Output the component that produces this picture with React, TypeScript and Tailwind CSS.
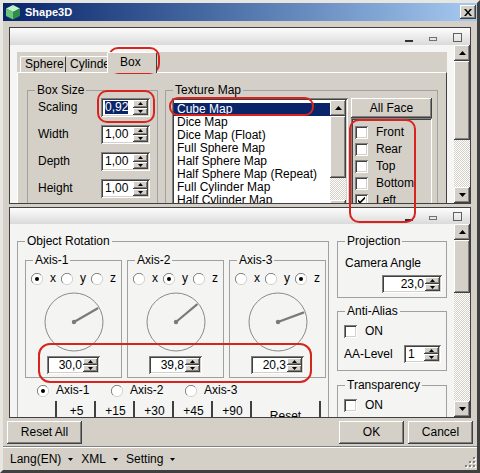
import React from "react";

const raised =
  "bg-[#d4d0c8] shadow-[inset_-1px_-1px_#404040,inset_1px_1px_#ffffff,inset_-2px_-2px_#808080]";
const sunken =
  "shadow-[inset_1px_1px_#808080,inset_-1px_-1px_#ffffff,inset_2px_2px_#404040,inset_-2px_-2px_#d4d0c8]";

function Tri({ up, w = 7 }: { up?: boolean; w?: number }) {
  const h = Math.ceil(w / 2);
  return (
    <svg width={w} height={h} viewBox={`0 0 ${w} ${h}`}>
      <polygon
        points={up ? `0,${h} ${w},${h} ${w / 2},0` : `0,0 ${w},0 ${w / 2},${h}`}
        fill="#000"
      />
    </svg>
  );
}

function VScroll({ thumb }: { thumb: string }) {
  return (
    <div className="w-[16px] shrink-0 flex flex-col bg-[repeating-conic-gradient(#d4d0c8_0%_25%,#ffffff_0%_50%)] bg-size-[2px_2px]">
      <div className={`h-[16px] flex items-center justify-center ${raised}`}>
        <Tri up />
      </div>
      <div className={`${thumb} ${raised}`} />
      <div className="flex-1" />
      <div className={`h-[16px] flex items-center justify-center ${raised}`}>
        <Tri />
      </div>
    </div>
  );
}

function Spin({
  value,
  className,
  right,
  selected,
}: {
  value: string;
  className: string;
  right?: boolean;
  selected?: boolean;
}) {
  return (
    <div className={`flex bg-white p-[2px] ${sunken} ${className}`}>
      <div className={`flex-1 flex items-center ${right ? "justify-end pr-[1px]" : "pl-[2px]"}`}>
        <span className={selected ? "bg-[#0a246a] text-white" : ""}>{value}</span>
      </div>
      <div className="w-[15px] flex flex-col">
        <div className={`flex-1 flex items-center justify-center ${raised}`}>
          <Tri up w={5} />
        </div>
        <div className={`flex-1 flex items-center justify-center ${raised}`}>
          <Tri w={5} />
        </div>
      </div>
    </div>
  );
}

function Check({ checked }: { checked?: boolean }) {
  return (
    <div className={`w-[13px] h-[13px] shrink-0 bg-white ${sunken} flex items-center justify-center`}>
      {checked && (
        <svg width="7" height="7" viewBox="0 0 7 7">
          <path d="M0 2.5 L2 4.5 L7 -0.5 L7 1.8 L2 6.8 L0 4.8 Z" fill="#000" />
        </svg>
      )}
    </div>
  );
}

function Radio({ on }: { on?: boolean }) {
  return (
    <svg width="12" height="12" viewBox="0 0 12 12" className="shrink-0">
      <circle cx="6" cy="6" r="5.5" fill="#fff" />
      <path d="M10 2 A5.5 5.5 0 0 0 2 10" fill="none" stroke="#808080" />
      <path d="M2 10 A5.5 5.5 0 0 0 10 2" fill="none" stroke="#d4d0c8" />
      {on && <circle cx="6" cy="6" r="2" fill="#000" />}
    </svg>
  );
}

function Dial({ deg }: { deg: number }) {
  const a = (deg * Math.PI) / 180;
  const x = 30 + 27 * Math.cos(a);
  const y = 30 - 27 * Math.sin(a);
  return (
    <svg width="60" height="60" viewBox="0 0 60 60">
      <circle cx="30" cy="30" r="29" fill="none" stroke="#8a8a8a" />
      <line x1="30" y1="30" x2={x} y2={y} stroke="#7a7a7a" strokeWidth="2.2" strokeLinecap="round" />
      <circle cx="30" cy="30" r="2.2" fill="#7a7a7a" />
    </svg>
  );
}

function Group({
  title,
  className,
  children,
}: {
  title: string;
  className: string;
  children: React.ReactNode;
}) {
  return (
    <fieldset className={`border border-[#a0a0a0] shrink-0 ${className}`}>
      <legend className="ml-[7px] px-[2px] leading-[13px]">{title}</legend>
      {children}
    </fieldset>
  );
}

function PanelHeader({ tall }: { tall?: boolean }) {
  return (
    <div
      className={`${tall ? "h-[17px] pb-[3px]" : "h-[16px] pb-[3px]"} shrink-0 bg-linear-to-b from-[#fdfdfd] to-[#dadada] flex items-end justify-end pr-[8px] gap-[16px]`}
    >
      <div className="w-[8px] h-[2px] bg-[#303030]" />
      <div className="w-[8px] h-[4px] border border-[#707070] mb-[1px]" />
      <div className="w-[9px] h-[9px] border border-[#606060]" />
    </div>
  );
}

function Oval({ className }: { className: string }) {
  return <div className={`absolute border-2 border-[#d8231f] pointer-events-none ${className}`} />;
}

const textures = [
  "Cube Map",
  "Dice Map",
  "Dice Map (Float)",
  "Full Sphere Map",
  "Half Sphere Map",
  "Half Sphere Map (Repeat)",
  "Full Cylinder Map",
  "Half Cylinder Map",
  "Full Box Map",
];

const axes = [
  { name: "Axis-1", sel: 0, value: "30,0", deg: 30 },
  { name: "Axis-2", sel: 1, value: "39,8", deg: 39.8 },
  { name: "Axis-3", sel: 2, value: "20,3", deg: 20.3 },
];

export default function App() {
  return (
    <div className="relative w-[480px] h-[473px] overflow-hidden bg-[#d4d0c8] border-[3px] border-t-[#e8e6e0] border-l-[#e8e6e0] border-r-[#404040] border-b-[#404040] flex flex-col font-['Liberation_Sans',Arial,sans-serif] text-[12px] leading-[13px] text-black">
      {/* title bar */}
      <div className="h-[18px] shrink-0 flex items-center bg-linear-to-r from-[#0a246a] to-[#a6caf0] pl-[2px] pr-[1px]">
        <svg width="16" height="16" viewBox="0 0 16 16">
          <polygon points="8,1 15,4.5 8,8 1,4.5" fill="#bff2c6" />
          <polygon points="1,4.5 8,8 8,15.5 1,12" fill="#6cc47a" />
          <polygon points="15,4.5 8,8 8,15.5 15,12" fill="#2f8c4a" />
        </svg>
        <span className="ml-[4px] text-white font-bold text-[11px]">Shape3D</span>
        <div className={`ml-auto w-[16px] h-[14px] flex items-center justify-center ${raised}`}>
          <svg width="8" height="7" viewBox="0 0 8 7">
            <path d="M0 0h2l2 2.4L6 0h2L5 3.5 8 7H6L4 4.6 2 7H0l3-3.5z" fill="#000" />
          </svg>
        </div>
      </div>

      <div className="flex-1 flex flex-col px-[4px] pt-[6px]">
        {/* top panel */}
        <div className="mx-[2px] h-[177px] shrink-0 border border-[#404040] flex flex-col overflow-hidden">
          <PanelHeader tall />
          <div className="flex flex-1 min-h-0">
            <div className="flex-1 bg-[#f5f5f4] pl-[7px] pt-[7px] overflow-hidden">
              <div className="w-[430px] h-[200px] bg-[#d4d0c8] flex flex-col">
                <div className="h-[20px] shrink-0 flex items-end pl-[3px]">
                  <div className="h-[16px] w-[46px] pl-[4px] flex items-center whitespace-nowrap border-t border-l border-white border-r border-r-[#404040] rounded-t-[2px]">
                    Sphere
                  </div>
                  <div className="h-[16px] w-[43px] pl-[4px] flex items-center whitespace-nowrap border-t border-white rounded-t-[2px]">
                    Cylinder
                  </div>
                  <div className="relative z-10 -ml-[2px] -mb-[1px] h-[21px] w-[50px] pl-[12px] pt-[3px] bg-[#d4d0c8] border-t border-l border-white border-r border-r-[#404040] rounded-t-[2px]">
                    Box
                  </div>
                </div>
                <div className="flex-1 border-t border-l border-white border-r border-r-[#404040] flex pl-[9px] pt-[11px] gap-[7px]">
                  <Group title="Box Size" className="w-[131px] h-[140px]">
                    <div className="mt-[1px] pl-[10px] flex flex-col gap-[8px]">
                      {[
                        ["Scaling", "0,92"],
                        ["Width", "1,00"],
                        ["Depth", "1,00"],
                        ["Height", "1,00"],
                      ].map(([l, v], i) => (
                        <div key={l} className="flex items-center h-[19px]">
                          <span className="w-[63px]">{l}</span>
                          <Spin value={v} className="w-[49px] h-[19px]" selected={i === 0} />
                        </div>
                      ))}
                    </div>
                  </Group>
                  <Group title="Texture Map" className="w-[273px] h-[140px]">
                    <div className="mt-[1px] flex pl-[6px] gap-[3px]">
                      <div className={`w-[176px] h-[120px] bg-white p-[2px] flex ${sunken}`}>
                        <div className="flex-1 pt-[3px] overflow-hidden">
                          {textures.map((t, i) => (
                            <div
                              key={t}
                              className={`h-[13px] pl-[3px] whitespace-nowrap ${i === 0 ? "bg-[#0a246a] text-white" : ""}`}
                            >
                              {t}
                            </div>
                          ))}
                        </div>
                        <VScroll thumb="h-[62px]" />
                      </div>
                      <div className="w-[81px] flex flex-col">
                        <div className={`h-[20px] flex items-center justify-center ${raised}`}>All Face</div>
                        <div className={`h-[100px] p-[2px] pt-[8px] pl-[4px] flex flex-col gap-[4px] ${sunken}`}>
                          {["Front", "Rear", "Top", "Bottom", "Left"].map((f) => (
                            <div key={f} className="flex items-center h-[13px]">
                              <Check checked={f === "Left"} />
                              <span className="ml-[8px]">{f}</span>
                            </div>
                          ))}
                        </div>
                      </div>
                    </div>
                  </Group>
                </div>
              </div>
            </div>
            <VScroll thumb="h-[79px]" />
          </div>
        </div>

        {/* bottom panel */}
        <div className="mx-[2px] mt-[3px] h-[211px] shrink-0 border border-[#404040] flex flex-col overflow-hidden">
          <PanelHeader />
          <div className="flex flex-1 min-h-0">
            <div className="flex-1 bg-[#f4f4f3] flex pl-[7px] pt-[11px] gap-[8px] overflow-hidden">
              <Group title="Object Rotation" className="w-[312px] h-[200px]">
                <div className="flex gap-[5px] pl-[7px] mt-[6px]">
                  {axes.map((a) => (
                    <fieldset key={a.name} className="w-[95px] border border-[#a0a0a0]">
                      <legend className="ml-[7px] px-[2px] leading-[13px]">{a.name}</legend>
                      <div className="mt-[5px] flex pl-[5px]">
                        {["x", "y", "z"].map((c, i) => (
                          <div key={c} className="w-[30px] flex items-center h-[13px]">
                            <Radio on={i === a.sel} />
                            <span className="ml-[7px]">{c}</span>
                          </div>
                        ))}
                      </div>
                      <div className="mt-[7px] flex justify-center">
                        <Dial deg={a.deg} />
                      </div>
                      <div className="mt-[4px] mb-[3px] flex justify-center">
                        <Spin value={a.value} right className="w-[53px] h-[18px]" />
                      </div>
                    </fieldset>
                  ))}
                </div>
                <div className="flex mt-[6px] pl-[19px]">
                  {axes.map((a, i) => (
                    <div key={a.name} className="w-[74px] flex items-center h-[13px]">
                      <Radio on={i === 0} />
                      <span className="ml-[7px]">{a.name}</span>
                    </div>
                  ))}
                </div>
                <div className="flex mt-[4px] pl-[37px]">
                  {["+5", "+15", "+30", "+45", "+90"].map((b) => (
                    <div key={b} className="w-[39px] h-[20px] border-l-2 border-[#404040] flex items-center justify-center pl-[2px]">
                      {b}
                    </div>
                  ))}
                  <div className="w-[71px] h-[28px] border-x-2 border-[#404040] flex items-center justify-center pt-[2px]">
                    Reset
                  </div>
                </div>
              </Group>

              <div className="w-[110px] flex flex-col">
                <Group title="Projection" className="w-[110px]">
                  <div className="mt-[9px] pl-[7px]">Camera Angle</div>
                  <div className="mt-[5px] mb-[4px] flex justify-end pr-[4px]">
                    <Spin value="23,0" right className="w-[60px] h-[18px]" />
                  </div>
                </Group>
                <Group title="Anti-Alias" className="w-[110px] mt-[7px]">
                  <div className="mt-[7px] pl-[6px] flex items-center">
                    <Check />
                    <span className="ml-[8px]">ON</span>
                  </div>
                  <div className="mt-[7px] mb-[7px] pl-[6px] pr-[5px] flex items-center">
                    <span>AA-Level</span>
                    <Spin value="1" className="ml-auto w-[37px] h-[18px]" />
                  </div>
                </Group>
                <Group title="Transparency" className="w-[110px] h-[60px] mt-[8px]">
                  <div className="mt-[7px] pl-[6px] flex items-center">
                    <Check />
                    <span className="ml-[8px]">ON</span>
                  </div>
                </Group>
              </div>
            </div>
            <VScroll thumb="h-[53px]" />
          </div>
        </div>

        {/* dialog buttons */}
        <div className="flex mt-[3px] h-[23px] shrink-0">
          <div className={`w-[75px] flex items-center justify-center ${raised}`}>Reset All</div>
          <div className={`ml-auto w-[65px] flex items-center justify-center ${raised}`}>OK</div>
          <div className={`ml-[4px] w-[65px] flex items-center justify-center ${raised}`}>Cancel</div>
        </div>

        <div className="-mx-[4px] mt-[2px] h-[2px] shrink-0 border-t border-[#808080] border-b border-b-white" />

        {/* menu bar */}
        <div className="-mx-[4px] flex-1 flex items-center pl-[7px]">
          {["Lang(EN)", "XML", "Setting"].map((m) => (
            <div key={m} className="flex items-center mr-[8px]">
              <span>{m}</span>
              <span className="ml-[7px] mt-[1px]">
                <Tri w={5} />
              </span>
            </div>
          ))}
          <svg width="11" height="11" viewBox="0 0 11 11" className="ml-auto self-end mb-[2px] mr-[1px]">
            {[
              [8, 0],
              [8, 4],
              [4, 4],
              [8, 8],
              [4, 8],
              [0, 8],
            ].map(([x, y]) => (
              <g key={`${x}-${y}`}>
                <rect x={x + 1} y={y + 1} width="2" height="2" fill="#ffffff" />
                <rect x={x} y={y} width="2" height="2" fill="#808080" />
              </g>
            ))}
          </svg>
        </div>
      </div>

      {/* red annotation marks */}
      <Oval className="left-[105px] top-[44px] w-[52px] h-[27px] rounded-[10px]" />
      <Oval className="left-[94px] top-[87px] w-[58px] h-[33px] rounded-[10px]" />
      <Oval className="left-[166px] top-[94px] w-[145px] h-[19px] rounded-[9px]" />
      <Oval className="left-[346px] top-[116px] w-[67px] h-[104px] rounded-[10px]" />
      <Oval className="left-[35px] top-[340px] w-[274px] h-[40px] rounded-[12px]" />
    </div>
  );
}
